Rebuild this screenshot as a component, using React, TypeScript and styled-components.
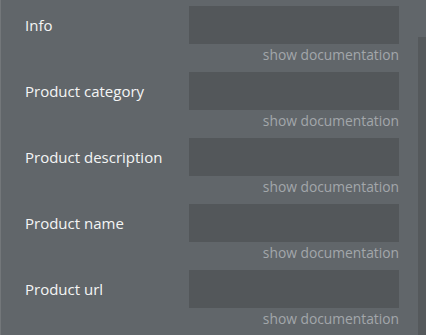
import * as React from 'react';
import styled, { createGlobalStyle } from 'styled-components';

const GlobalStyle = createGlobalStyle`
  html, body {
    margin: 0;
    padding: 0;
    background: #61666a;
  }
  body {
    font-family: 'Open Sans', 'Noto Sans', sans-serif;
  }
`;

const Panel = styled.div`
  display: flex;
  width: 426px;
  height: 335px;
  overflow: hidden;
  background: #61666a;
  border-left: 1px solid #73777a;
  box-sizing: border-box;
`;

const Fields = styled.div`
  flex: 1;
  display: flex;
  flex-direction: column;
  padding: 6px 19px 0 24px;
`;

const Row = styled.div`
  display: grid;
  grid-template-columns: 1fr 210px;
  margin-bottom: 8px;
`;

const Label = styled.div`
  height: 38px;
  display: flex;
  align-items: center;
  color: #f4f5f5;
  font-size: 15px;
  font-weight: 400;
`;

const Right = styled.div`
  display: flex;
  flex-direction: column;
  align-items: flex-end;
`;

const Input = styled.div`
  width: 100%;
  height: 38px;
  background: #53575a;
`;

const DocLink = styled.span`
  margin-top: 2px;
  height: 18px;
  line-height: 18px;
  font-size: 13.8px;
  color: #a3a7aa;
  cursor: pointer;
`;

const ScrollTrack = styled.div`
  width: 8px;
  margin-top: 37px;
  background: #55595c;
`;

const fields = ['Info', 'Product category', 'Product description', 'Product name', 'Product url'];

export default function App() {
  return (
    <>
      <GlobalStyle />
      <Panel>
        <Fields>
          {fields.map(name => (
            <Row key={name}>
              <Label>{name}</Label>
              <Right>
                <Input />
                <DocLink>show documentation</DocLink>
              </Right>
            </Row>
          ))}
        </Fields>
        <ScrollTrack />
      </Panel>
    </>
  );
}
